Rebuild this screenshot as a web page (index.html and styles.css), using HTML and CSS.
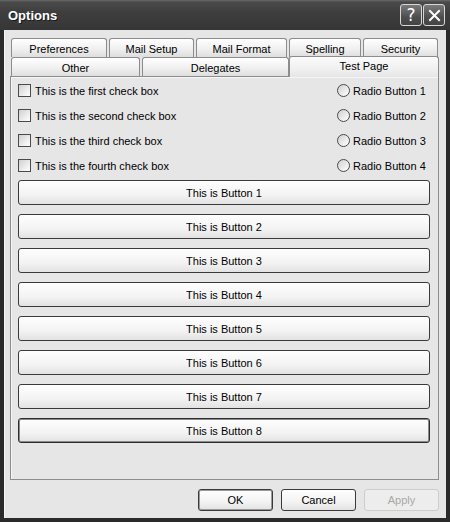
FILE: index.html
```html
<!DOCTYPE html>
<html>
<head>
<meta charset="utf-8">
<link rel="stylesheet" href="styles.css">
</head>
<body>
<div class="window">
  <div class="titlebar">
    <span class="title">Options</span>
    <div class="tbtns">
      <span class="tbtn help">?</span>
      <span class="tbtn close"><svg width="13" height="13" viewBox="0 0 13 13"><path d="M2 2 L11 11 M11 2 L2 11" stroke="#fff" stroke-width="2" stroke-linecap="square"/></svg></span>
    </div>
  </div>
  <div class="client">
    <div class="tabs">
      <div class="tabrow">
        <div class="tab w-pref">Preferences</div>
        <div class="tab w-mail">Mail Setup</div>
        <div class="tab w-fmt">Mail Format</div>
        <div class="tab w-spell">Spelling</div>
        <div class="tab w-sec">Security</div>
      </div>
      <div class="tabrow">
        <div class="tab w-other">Other</div>
        <div class="tab w-deleg">Delegates</div>
        <div class="tab w-test selected">Test Page</div>
      </div>
    </div>
    <div class="panel">
      <div class="checks">
        <label class="opt"><span class="cbox"></span>This is the first check box</label>
        <label class="opt"><span class="radio"></span>Radio Button 1</label>
        <label class="opt"><span class="cbox"></span>This is the second check box</label>
        <label class="opt"><span class="radio"></span>Radio Button 2</label>
        <label class="opt"><span class="cbox"></span>This is the third check box</label>
        <label class="opt"><span class="radio"></span>Radio Button 3</label>
        <label class="opt"><span class="cbox"></span>This is the fourth check box</label>
        <label class="opt"><span class="radio"></span>Radio Button 4</label>
      </div>
      <div class="buttons">
        <div class="btn">This is Button 1</div>
        <div class="btn">This is Button 2</div>
        <div class="btn">This is Button 3</div>
        <div class="btn">This is Button 4</div>
        <div class="btn">This is Button 5</div>
        <div class="btn">This is Button 6</div>
        <div class="btn">This is Button 7</div>
        <div class="btn focused">This is Button 8</div>
      </div>
    </div>
    <div class="footer">
      <div class="btn dlg default">OK</div>
      <div class="btn dlg">Cancel</div>
      <div class="btn dlg disabled">Apply</div>
    </div>
  </div>
</div>
</body>
</html>
```
FILE: styles.css
```css
* { box-sizing: border-box; }
html, body { margin: 0; padding: 0; }
body {
  width: 450px;
  height: 522px;
  overflow: hidden;
  font-family: "Liberation Sans", Arial, sans-serif;
  font-size: 11px;
  color: #000;
  background: #2b2b2b;
}
.window {
  width: 450px;
  height: 522px;
  display: flex;
  flex-direction: column;
  background: #2a2a2a;
}
.titlebar {
  flex: none;
  height: 30px;
  display: flex;
  align-items: center;
  justify-content: space-between;
  padding: 0 5px 0 8px;
  background: linear-gradient(#6a6a6a 0, #4a4a4a 2px, #3e3e3e 40%, #363636 100%);
}
.title {
  color: #fff;
  font-weight: bold;
  font-size: 13px;
  text-shadow: 1px 1px 0 #1a1a1a;
  padding-top: 1px;
}
.tbtns { display: flex; gap: 1px; }
.tbtn {
  width: 22px;
  height: 22px;
  border: 1px solid #d8d8d8;
  border-radius: 3px;
  background: linear-gradient(#7a7a7a, #4e4e4e 60%, #444);
  color: #fff;
  display: flex;
  align-items: center;
  justify-content: center;
  font: 17px "DejaVu Sans", sans-serif;
}
.client {
  flex: 1;
  margin: 0 4px 4px;
  background: #e6e6e6;
  display: flex;
  flex-direction: column;
  padding: 8px 7px 0 6px;
  box-shadow: inset 1px 0 0 #f4f4f4;
}
.tabs {
  display: flex;
  flex-direction: column;
  padding-left: 1px;
  position: relative;
  z-index: 1;
}
.tabrow { display: flex; height: 19px; }
.tab {
  flex: none;
  height: 19px;
  margin-right: 2px;
  border: 1px solid #8c8c8c;
  border-bottom: none;
  border-radius: 3px 3px 0 0;
  background: linear-gradient(#ffffff, #f0f0f0 55%, #dedede);
  display: flex;
  align-items: center;
  justify-content: center;
  padding-top: 1px;
}
.w-pref { width: 96px; }
.w-mail { width: 85px; }
.w-fmt { width: 91px; }
.w-spell { width: 72px; }
.w-sec { width: 75px; }
.w-other { width: 129px; }
.w-deleg { width: 147px; margin-right: 0; }
.w-test { width: 150px; }
.tab.selected {
  height: 21px;
  margin-top: -1px;
  margin-right: 0;
  align-items: flex-start;
  padding-top: 3px;
  background: linear-gradient(#fbfbfb, #f0f0f0 60%, #e6e6e6);
  border-color: #8c8c8c;
}
.panel {
  flex: none;
  height: 404px;
  border: 1px solid #8c8c8c;
  background: #e6e6e6;
  box-shadow: inset 1px 1px 0 #f6f6f6;
  padding: 1px 8px 0 7px;
}
.checks {
  display: grid;
  grid-template-columns: 1fr 93px;
  grid-auto-rows: 25px;
}
.opt {
  display: flex;
  align-items: center;
  gap: 4px;
}
.opt .radio { margin-right: -1px; }
.cbox {
  flex: none;
  width: 13px;
  height: 13px;
  border: 1px solid #4a4a4a;
  background: linear-gradient(135deg, #cfcfcf, #f2f2f2 70%, #fdfdfd);
}
.radio {
  flex: none;
  width: 13px;
  height: 13px;
  border: 1px solid #4a4a4a;
  border-radius: 50%;
  background: linear-gradient(135deg, #cfcfcf, #f2f2f2 70%, #fdfdfd);
}
.buttons {
  margin-top: 2px;
  display: flex;
  flex-direction: column;
  gap: 9px;
}
.btn {
  height: 25px;
  border: 1px solid #3a3a3a;
  border-radius: 3px;
  background: linear-gradient(#fefefe, #f3f3f3 60%, #e2e2e2);
  display: flex;
  align-items: center;
  justify-content: center;
}
.btn.focused {
  box-shadow: inset 0 0 0 1px #8a8a8a;
  border-color: #2e2e2e;
}
.footer {
  flex: 1;
  display: flex;
  justify-content: flex-end;
  align-items: flex-start;
  gap: 8px;
  padding-top: 9px;
}
.btn.dlg {
  width: 75px;
  height: 22px;
}
.btn.default { box-shadow: inset 0 0 0 1px #9a9a9a; }
.btn.disabled {
  border-color: #cdcdcd;
  background: #ededed;
  color: #a8a8a8;
}
```
